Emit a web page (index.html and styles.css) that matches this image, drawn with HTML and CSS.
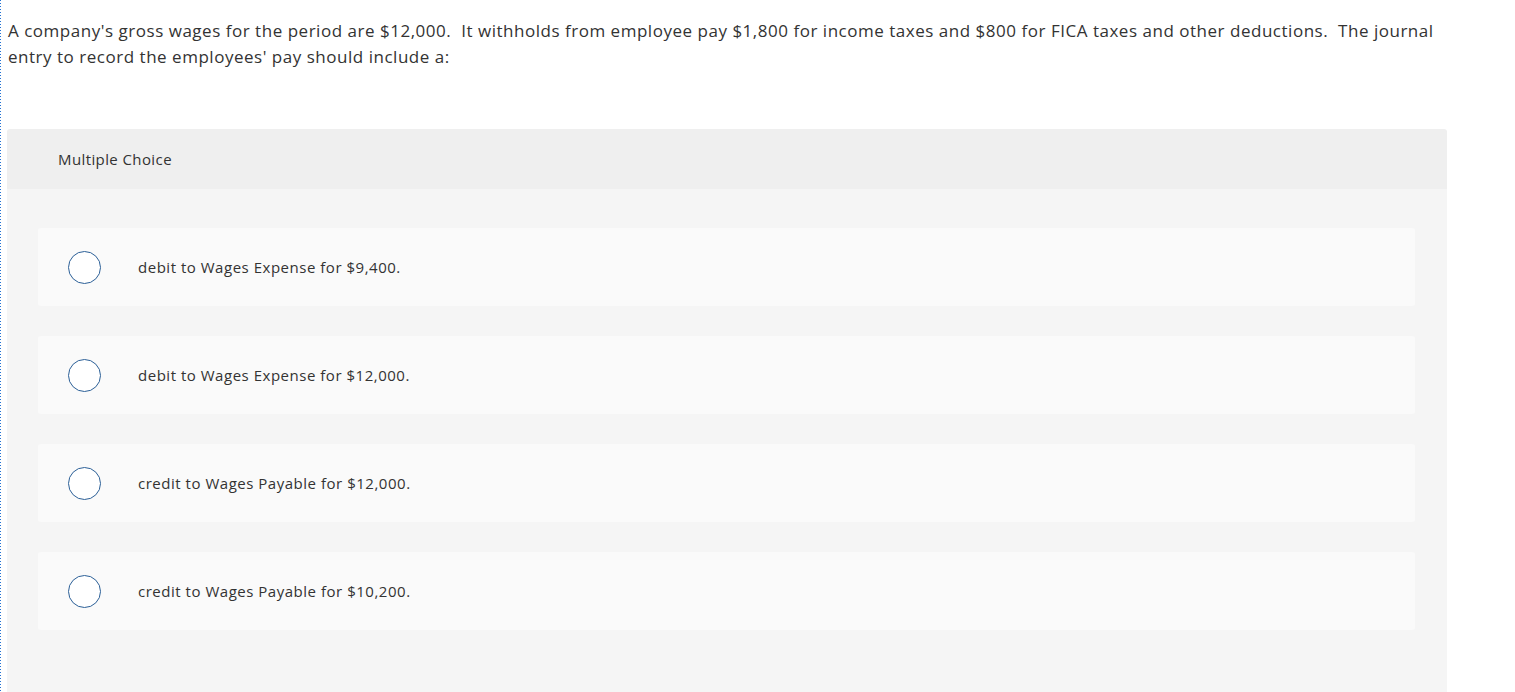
FILE: index.html
```html
<!DOCTYPE html>
<html>
<head>
<meta charset="utf-8">
<link rel="stylesheet" href="styles.css">
</head>
<body>
<div class="page">
  <p class="question">A company's gross wages for the period are $12,000.&nbsp; It withholds from employee pay $1,800 for income taxes and $800 for FICA taxes and other deductions.&nbsp; The journal entry to record the employees' pay should include a:</p>
  <section class="panel">
    <header class="panel-head">Multiple Choice</header>
    <div class="panel-body">
      <div class="option"><span class="radio"></span><span class="label">debit to Wages Expense for $9,400.</span></div>
      <div class="option"><span class="radio"></span><span class="label">debit to Wages Expense for $12,000.</span></div>
      <div class="option"><span class="radio"></span><span class="label">credit to Wages Payable for $12,000.</span></div>
      <div class="option"><span class="radio"></span><span class="label">credit to Wages Payable for $10,200.</span></div>
    </div>
  </section>
</div>
</body>
</html>
```
FILE: styles.css
```css
html, body {
  margin: 0;
  padding: 0;
  background: #fff;
}
body {
  font-family: "Open Sans", Lato, sans-serif;
  color: #333;
  overflow: hidden;
  height: 692px;
}
.page {
  height: 692px;
  box-sizing: border-box;
  padding-left: 7px;
  padding-top: 18px;
  background-image: repeating-linear-gradient(to bottom, #2472d3 0, #2472d3 1px, transparent 1px, transparent 3px);
  background-size: 1px 100%;
  background-repeat: no-repeat;
  background-position: 0 0;
}
.question {
  margin: 0 0 0 1px;
  font-size: 17px;
  line-height: 26px;
  letter-spacing: 0.52px;
  width: 1445px;
  color: #333;
}
.panel {
  margin-top: 59px;
  width: 1440px;
  border-radius: 3px 3px 0 0;
  overflow: hidden;
}
.panel-head {
  background: #efefef;
  height: 60px;
  display: flex;
  align-items: center;
  padding-left: 51px;
  font-size: 15px;
  letter-spacing: 0.4px;
  color: #333;
}
.panel-body {
  background: #f5f5f5;
  padding: 39px 32px 80px 31px;
  display: flex;
  flex-direction: column;
  gap: 30px;
}
.option {
  background: #fafafa;
  border-radius: 3px;
  height: 78px;
  display: flex;
  align-items: center;
  padding-left: 30px;
}
.radio {
  width: 31px;
  height: 31px;
  border: 1.5px solid #2b5f97;
  border-radius: 50%;
  background: #fff;
  flex: none;
}
.label {
  margin-left: 37px;
  font-size: 15px;
  letter-spacing: 0.52px;
  color: #333;
}
```
